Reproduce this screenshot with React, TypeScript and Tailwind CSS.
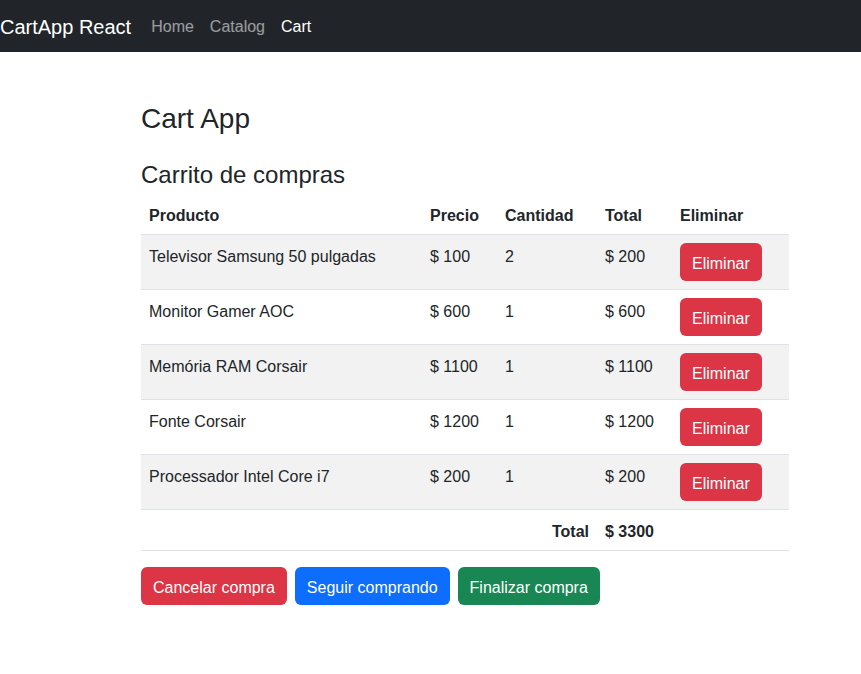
const items = [
  { name: 'Televisor Samsung 50 pulgadas', price: 100, qty: 2 },
  { name: 'Monitor Gamer AOC', price: 600, qty: 1 },
  { name: 'Memória RAM Corsair', price: 1100, qty: 1 },
  { name: 'Fonte Corsair', price: 1200, qty: 1 },
  { name: 'Processador Intel Core i7', price: 200, qty: 1 },
];

export default function App() {
  const total = items.reduce((acc, i) => acc + i.price * i.qty, 0);

  return (
    <div className="min-h-screen bg-white text-[#212529] font-['Segoe_UI','Liberation_Sans',sans-serif] text-base leading-6">
      {/* Navbar */}
      <nav className="h-[52px] bg-[#212529] flex items-center pt-[2px]">
        <span className="text-white text-xl leading-[30px] mr-3">CartApp React</span>
        <a className="px-2 text-white/55">Home</a>
        <a className="px-2 text-white/55">Catalog</a>
        <a className="px-2 text-white">Cart</a>
      </nav>

      <div className="w-[648px] ml-[141px] pt-[50px]">
        <h3 className="text-[28px] leading-[34px] font-normal mb-[24px]">Cart App</h3>
        <h4 className="text-2xl leading-[29px] font-normal mb-[5px]">Carrito de compras</h4>

        <table className="w-full table-fixed border-collapse mb-4">
          <colgroup>
            <col className="w-[281px]" />
            <col className="w-[75px]" />
            <col className="w-[100px]" />
            <col className="w-[75px]" />
            <col className="w-[117px]" />
          </colgroup>
          <thead>
            <tr className="border-b border-[#dee2e6] text-left">
              <th className="px-2 pt-[10px] pb-[6px] font-bold">Producto</th>
              <th className="px-2 pt-[10px] pb-[6px] font-bold">Precio</th>
              <th className="px-2 pt-[10px] pb-[6px] font-bold">Cantidad</th>
              <th className="px-2 pt-[10px] pb-[6px] font-bold">Total</th>
              <th className="px-2 pt-[10px] pb-[6px] font-bold">Eliminar</th>
            </tr>
          </thead>
          <tbody>
            {items.map((item, idx) => (
              <tr
                key={item.name}
                className={`border-b border-[#dee2e6] align-top ${idx % 2 === 0 ? 'bg-[#f2f2f2]' : 'bg-white'}`}
              >
                <td className="px-2 pt-[10px] pb-[6px]">{item.name}</td>
                <td className="px-2 pt-[10px] pb-[6px]">$ {item.price}</td>
                <td className="px-2 pt-[10px] pb-[6px]">{item.qty}</td>
                <td className="px-2 pt-[10px] pb-[6px]">$ {item.price * item.qty}</td>
                <td className="p-2">
                  <button className="h-[38px] px-3 pt-1 rounded-md bg-[#dc3545] text-white">Eliminar</button>
                </td>
              </tr>
            ))}
            <tr className="border-b border-[#dee2e6]">
              <td colSpan={3} className="px-2 pt-[10px] pb-[6px] text-right font-bold">Total</td>
              <td className="px-2 pt-[10px] pb-[6px] font-bold">$ {total}</td>
              <td className="p-2"></td>
            </tr>
          </tbody>
        </table>

        <div className="flex gap-2">
          <button className="h-[38px] px-3 pt-1 rounded-md bg-[#dc3545] text-white">Cancelar compra</button>
          <button className="h-[38px] px-3 pt-1 rounded-md bg-[#0d6efd] text-white">Seguir comprando</button>
          <button className="h-[38px] px-3 pt-1 rounded-md bg-[#198754] text-white">Finalizar compra</button>
        </div>
      </div>
    </div>
  );
}
